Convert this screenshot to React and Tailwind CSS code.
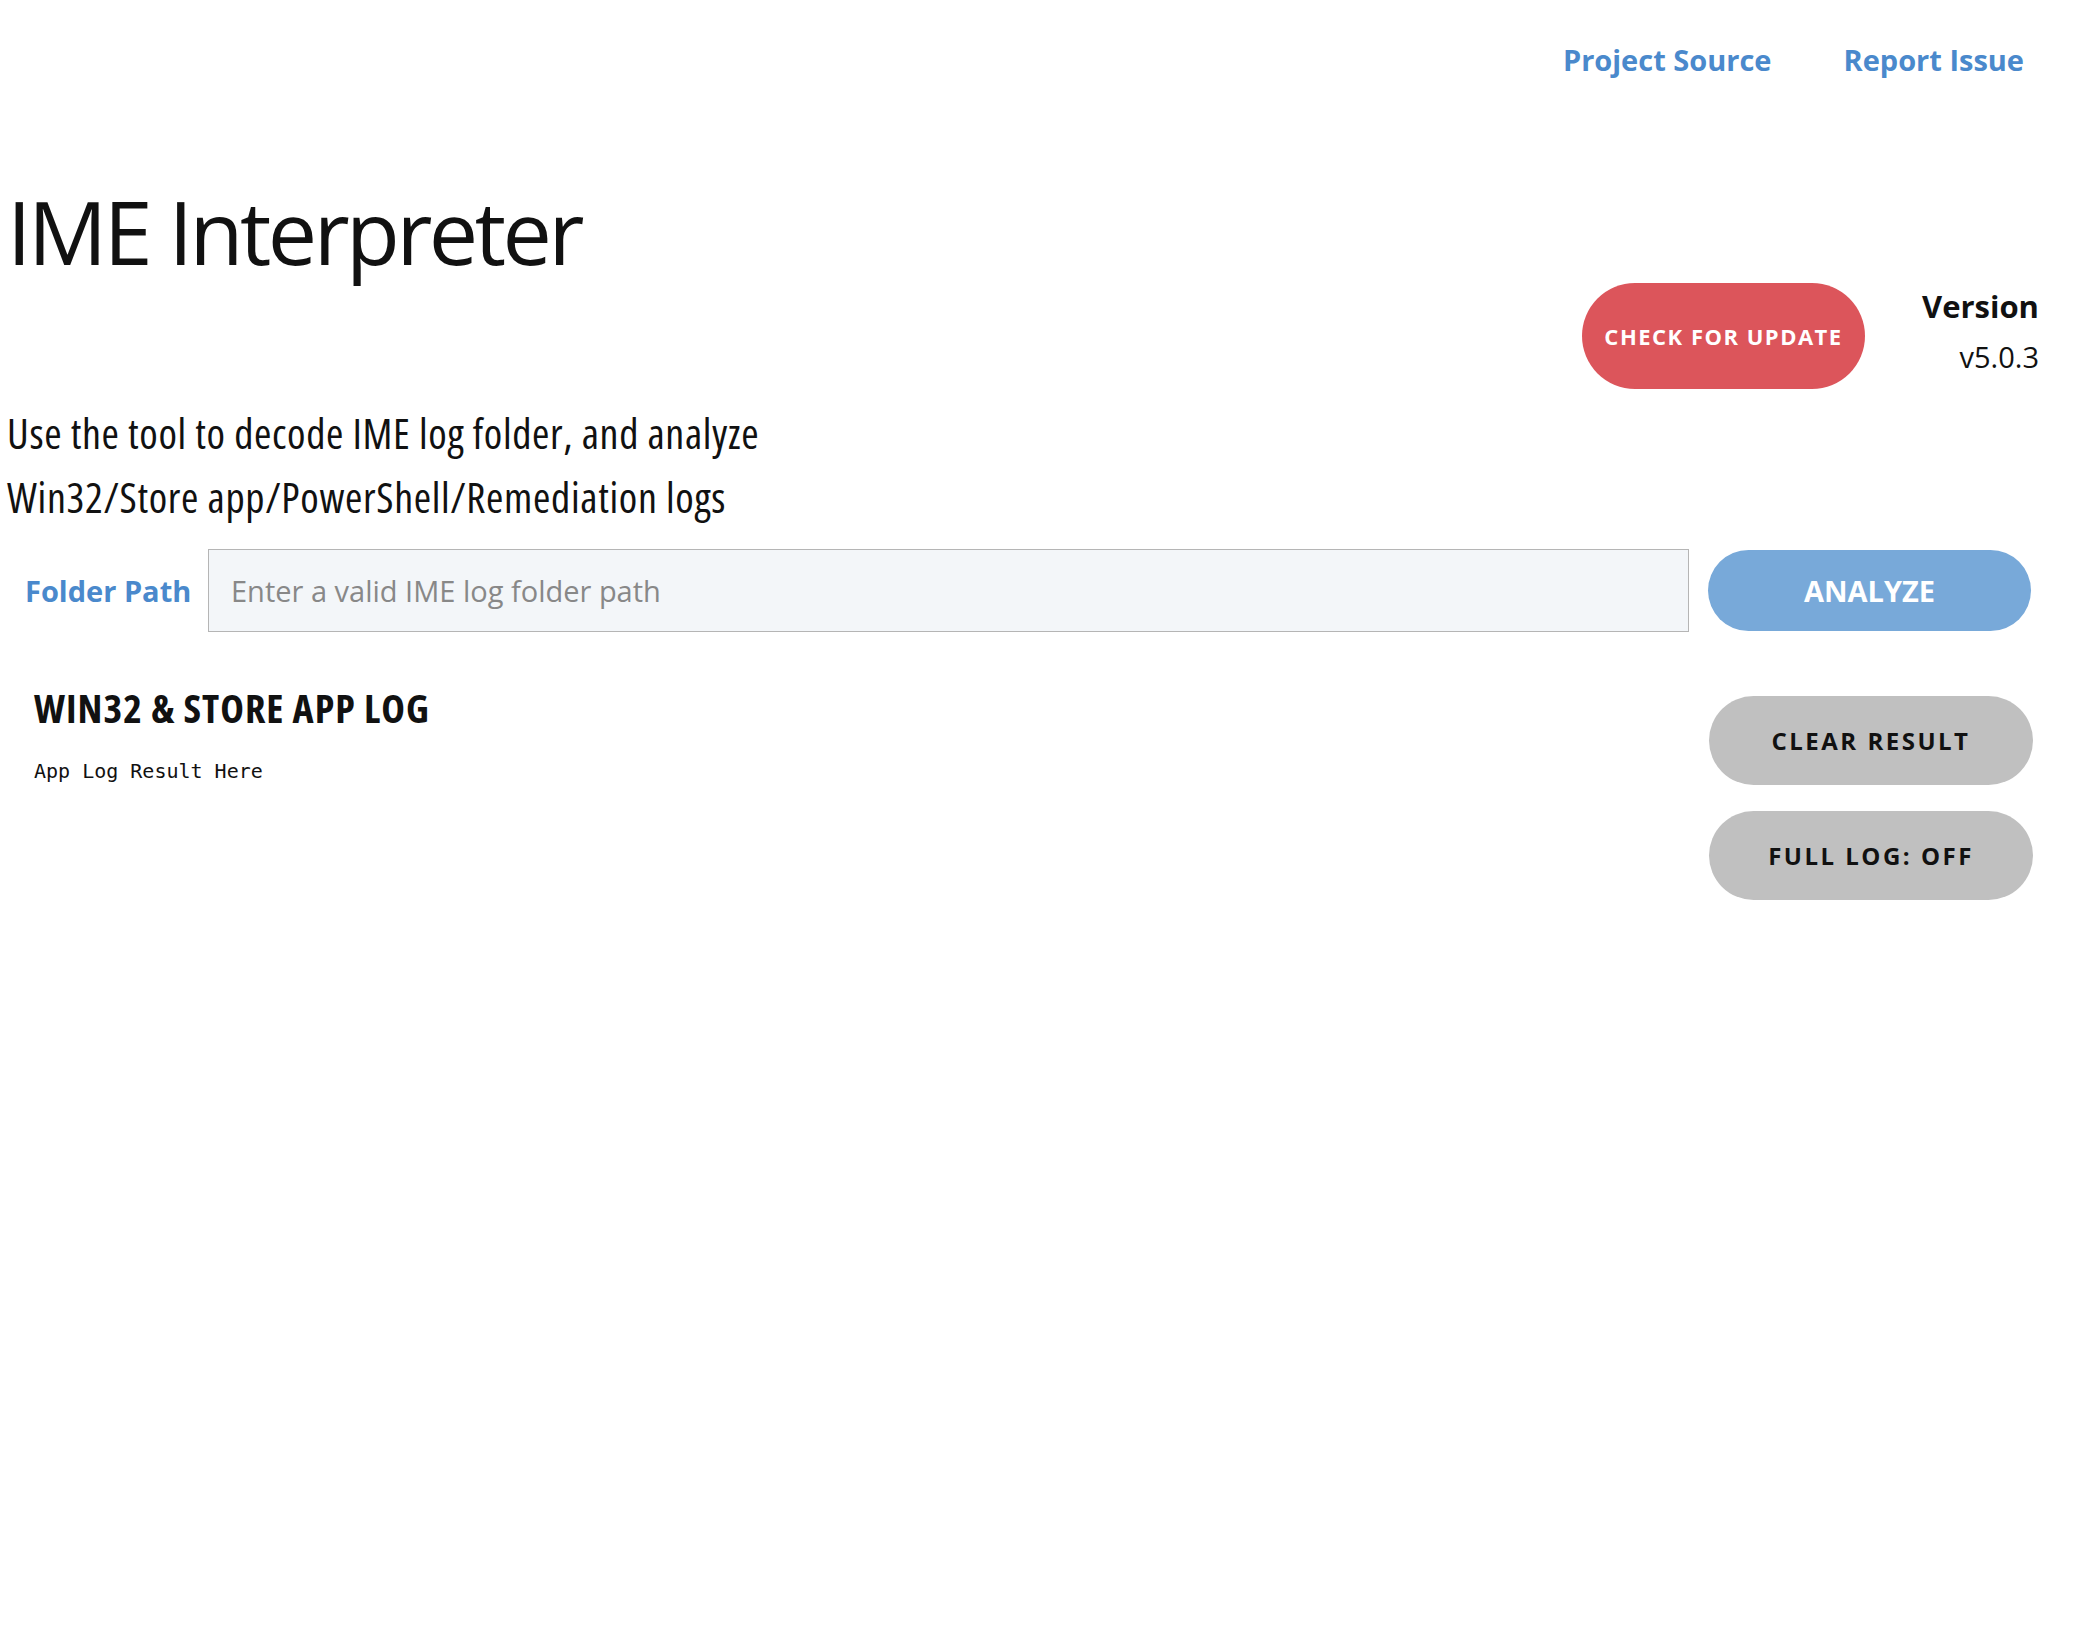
export default function App() {
  return (
    <div className="min-h-screen bg-white font-['Open_Sans',sans-serif] text-[#111] pl-[7px] pr-[40px]">
      {/* top links */}
      <nav className="flex justify-end gap-[72px] pt-[45px] pr-[15px] text-[29px] font-bold leading-none text-[#4a89cc]">
        <a href="#">Project Source</a>
        <a href="#">Report Issue</a>
      </nav>

      {/* title + update */}
      <div className="flex justify-between">
        <h1 className="mt-[113px] text-[88px] leading-none font-normal tracking-[-0.04em]">IME Interpreter</h1>
        <div className="flex items-start gap-[57px] mt-[209px]">
          <button className="w-[283px] h-[106px] rounded-full bg-[#dc555b] text-white text-[22px] font-bold tracking-[1.5px]">
            CHECK FOR UPDATE
          </button>
          <div className="text-right mt-[8px]">
            <div className="text-[31px] font-bold leading-none">Version</div>
            <div className="text-[29px] leading-none mt-[20px]">v5.0.3</div>
          </div>
        </div>
      </div>

      {/* description */}
      <div className="mt-[12px] text-[42px] leading-[64px] tracking-[0.65px] font-stretch-condensed">
        <p>Use the tool to decode IME log folder, and analyze</p>
        <p>Win32/Store app/PowerShell/Remediation logs</p>
      </div>

      {/* folder path */}
      <div className="flex items-center mt-[20px]">
        <label className="w-[201px] pl-[18px] text-[29px] font-bold text-[#4a89cc]">Folder Path</label>
        <input
          className="w-[1481px] h-[83px] border border-[#b5b5b5] bg-[#f3f6f9] px-[22px] text-[29px] placeholder:text-[#888] outline-none"
          placeholder="Enter a valid IME log folder path"
        />
        <button className="ml-[19px] w-[323px] h-[81px] rounded-full bg-[#78a9d9] text-white text-[29px] font-bold">
          ANALYZE
        </button>
      </div>

      {/* results */}
      <div className="flex justify-between items-start mt-[56px]">
        <div className="pl-[27px]">
          <h2 className="text-[40px] font-bold leading-none tracking-[1px] font-stretch-condensed">WIN32 &amp; STORE APP LOG</h2>
          <pre className="mt-[28px] font-['DejaVu_Sans_Mono',monospace] text-[20px]">App Log Result Here</pre>
        </div>
        <div className="flex flex-col gap-[26px] mt-[8px] mr-[6px]">
          <button className="w-[324px] h-[89px] rounded-full bg-[#c0c0c0] text-[24px] font-bold tracking-[2.5px]">
            CLEAR RESULT
          </button>
          <button className="w-[324px] h-[89px] rounded-full bg-[#c0c0c0] text-[24px] font-bold tracking-[2.5px]">
            FULL LOG: OFF
          </button>
        </div>
      </div>
    </div>
  );
}
